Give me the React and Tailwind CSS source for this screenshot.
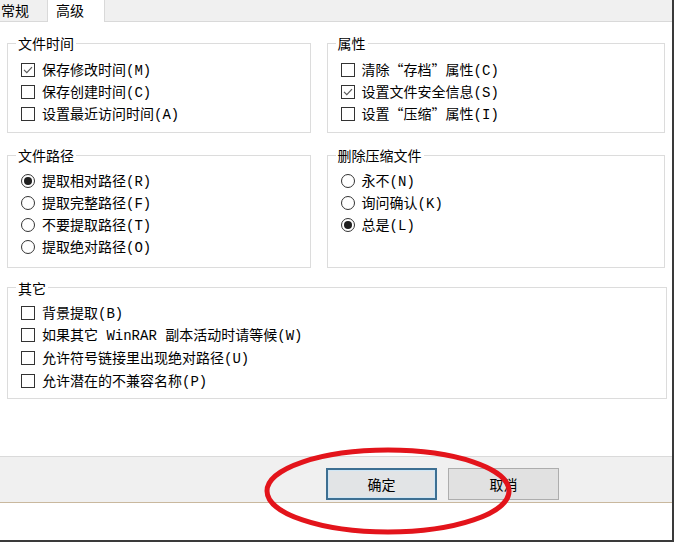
import React from "react";

const cjk = "font-['Noto_Sans_CJK_SC','Noto_Sans',sans-serif]";
const mono = "font-['Liberation_Mono','Noto_Sans_CJK_SC',monospace]";

const Check = ({ checked }) => (
  <span className="w-[14px] h-[14px] border border-[#333] bg-white flex items-center justify-center shrink-0">
    {checked && (
      <svg width="10" height="8" viewBox="0 0 10 8">
        <path d="M1 3.8 L3.8 6.6 L9 1.2" fill="none" stroke="#5a5a5a" strokeWidth="1.2" />
      </svg>
    )}
  </span>
);

const Radio = ({ checked }) => (
  <span className="w-[14px] h-[14px] rounded-full border border-[#333] bg-white flex items-center justify-center shrink-0">
    {checked && <span className="w-[8px] h-[8px] rounded-full bg-[#1e1e1e]" />}
  </span>
);

const Item = ({ radio, checked, label, k, tall }) => (
  <div className={`${tall ? "h-[22.6px]" : "h-[22px]"} flex items-center gap-[7px]`}>
    {radio ? <Radio checked={checked} /> : <Check checked={checked} />}
    <span className="text-[14px] leading-none whitespace-nowrap">
      {label}
      <span className={mono}>({k})</span>
    </span>
  </div>
);

const Group = ({ title, className, children }) => (
  <fieldset className={`border border-[#dcdcdc] pl-[13px] pr-2 min-w-0 ${className}`}>
    <legend className="-ml-[5px] px-[2px] text-[14px] leading-[20px]">{title}</legend>
    {children}
  </fieldset>
);

export default function App() {
  return (
    <div
      className={`relative w-[674px] h-[542px] bg-white text-black border-r-2 border-b-2 border-[#3a3a3a] flex flex-col overflow-hidden ${cjk}`}
    >
      {/* tabs */}
      <div className="h-[22px] shrink-0 bg-[#f0f0f0] border-b border-[#d9d9d9] flex items-start">
        <div className="w-[47px] pl-[1px] text-[14px] leading-[20px]">常规</div>
        <div className="w-[58px] h-[22px] bg-white border-x border-[#d9d9d9] pl-[8px] text-[14px] leading-[20px]">
          高级
        </div>
      </div>

      {/* content */}
      <div className="flex-1 px-[7px]">
        <div className="mt-[11px] flex gap-[16px]">
          <Group title="文件时间" className="w-[305px] pt-[6px] pb-[7px]">
            <Item checked label="保存修改时间" k="M" />
            <Item label="保存创建时间" k="C" />
            <Item label="设置最近访问时间" k="A" />
          </Group>
          <Group title="属性" className="w-[340px] pt-[6px] pb-[7px]">
            <Item label="清除“存档”属性" k="C" />
            <Item checked label="设置文件安全信息" k="S" />
            <Item label="设置“压缩”属性" k="I" />
          </Group>
        </div>

        <div className="mt-[12px] flex gap-[16px]">
          <Group title="文件路径" className="w-[305px] pt-[5px] pb-[8px]">
            <Item radio checked label="提取相对路径" k="R" />
            <Item radio label="提取完整路径" k="F" />
            <Item radio label="不要提取路径" k="T" />
            <Item radio tall label="提取绝对路径" k="O" />
          </Group>
          <Group title="删除压缩文件" className="w-[340px] pt-[5px] pb-[8px]">
            <Item radio label="永不" k="N" />
            <Item radio label="询问确认" k="K" />
            <Item radio checked label="总是" k="L" />
          </Group>
        </div>

        <div className="mt-[10px]">
          <Group title="其它" className="w-[660px] pt-[4px] pb-[6px]">
            <Item tall label="背景提取" k="B" />
            <Item
              tall
              label={
                <>
                  如果其它<span className={mono}> WinRAR </span>副本活动时请等候
                </>
              }
              k="W"
            />
            <Item tall label="允许符号链接里出现绝对路径" k="U" />
            <Item tall label="允许潜在的不兼容名称" k="P" />
          </Group>
        </div>
      </div>

      {/* buttons */}
      <div className="h-[47px] shrink-0 bg-[#f0f0f0] border-t border-[#dadada] border-b border-b-[#c9b89e] pt-[11px] pl-[326px] flex gap-[11px]">
        <button className="w-[111px] h-[32px] border-2 border-[#3d6f92] bg-[#e2e4e6] shadow-[inset_0_0_0_1px_#cfe6f5] text-[14px]">
          确定
        </button>
        <button className="w-[111px] h-[32px] border border-[#adadad] bg-[#e1e1e1] text-[14px]">
          取消
        </button>
      </div>
      <div className="h-[37px] shrink-0 bg-white" />

      {/* red annotation */}
      <svg className="absolute inset-0 pointer-events-none" width="674" height="542">
        <ellipse cx="388" cy="491" rx="121" ry="41" fill="none" stroke="#e3141b" strokeWidth="5" />
      </svg>
    </div>
  );
}
